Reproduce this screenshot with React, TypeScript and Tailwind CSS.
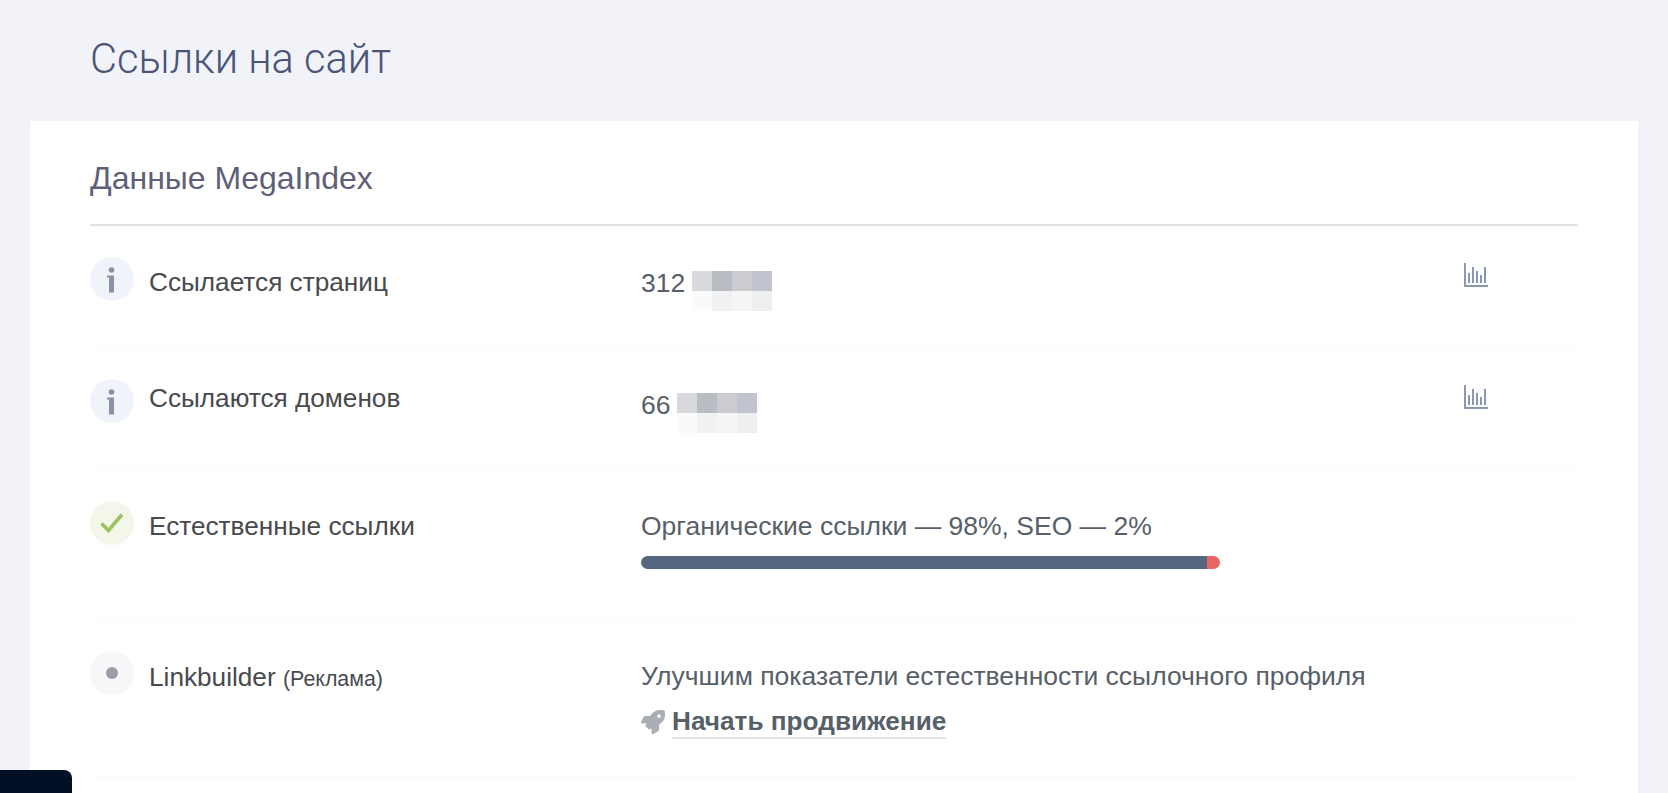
import { FaRocket } from "react-icons/fa";

function BlurredDelta() {
  const cells = [
    "bg-[#d8d9dc]",
    "bg-[#b9bdc3]",
    "bg-[#cbcbd0]",
    "bg-[#bfc4cf]",
    "bg-[#f9fafc]",
    "bg-[#f0f1f3]",
    "bg-[#f5f5f6]",
    "bg-[#eeeff1]",
  ];
  return (
    <div className="grid grid-cols-4 w-[80px] h-[40px] ml-[7px] mt-[10px]">
      {cells.map((c, i) => (
        <div key={i} className={`${c} h-[20px]`} />
      ))}
    </div>
  );
}

function ChartIcon() {
  return (
    <svg width="26" height="26" viewBox="0 0 26 26" className="text-[#8b98b5]" fill="currentColor">
      <rect x="1" y="1" width="2" height="24" />
      <rect x="1" y="23" width="24" height="2" />
      <rect x="5" y="11" width="2" height="10" />
      <rect x="9" y="5" width="2" height="16" />
      <rect x="13" y="9" width="2" height="12" />
      <rect x="17" y="13" width="2" height="8" />
      <rect x="21" y="5" width="2" height="16" />
    </svg>
  );
}

function InfoIcon() {
  return (
    <div className="w-[44px] h-[44px] rounded-full bg-[#eff3fa] shrink-0">
      <svg width="44" height="44" viewBox="0 0 44 44" fill="#8a91a6">
        <circle cx="21.5" cy="13" r="2.8" />
        <rect x="19" y="18.5" width="5" height="17" />
        <rect x="17" y="18.5" width="2" height="2" />
      </svg>
    </div>
  );
}

function CheckIcon() {
  return (
    <div className="w-[44px] h-[44px] rounded-full bg-[#f2f7e9] flex items-center justify-center shrink-0">
      <svg width="24" height="20" viewBox="0 0 24 20" fill="none">
        <path d="M1.5 10.5 L8.5 17.5 L22 1.5" stroke="#9cc264" strokeWidth="3.6" />
      </svg>
    </div>
  );
}

function DotIcon() {
  return (
    <div className="w-[44px] h-[44px] rounded-full bg-[#f7f7f9] flex items-center justify-center shrink-0">
      <div className="w-[12px] h-[12px] rounded-full bg-[#9c9da9]" />
    </div>
  );
}

function Row({ icon, label, rowClass, labelClass, valueClass, children, action }: any) {
  return (
    <div className={`flex border-b border-[#fafafb] ${rowClass}`}>
      <div className="w-[551px] flex gap-[15px] shrink-0">
        {icon}
        <div className={`text-[#484a4e] text-[26.2px] leading-[44px] ${labelClass}`}>{label}</div>
      </div>
      <div className={`flex-1 text-[#575f69] text-[26.5px] leading-[44px] ${valueClass}`}>{children}</div>
      {action && <div className="w-[115px] pt-[5px]">{action}</div>}
    </div>
  );
}

export default function App() {
  return (
    <div className="relative h-[793px] overflow-hidden bg-[#f1f3f8] font-['Liberation_Sans',sans-serif]">
      <h1 className="pl-[90px] pt-[34px] h-[121px] font-['Roboto',sans-serif] text-[41.6px] leading-[50px] text-[#4b5578] font-light">
        Ссылки на сайт
      </h1>
      <div className="mx-[30px] bg-white px-[60px] h-[672px]">
        <div className="h-[105px] pt-[36px] border-b-2 border-[#dfe1e4] text-[32px] leading-[42px] text-[#5f6078]">
          Данные MegaIndex
        </div>
        <Row
          icon={<InfoIcon />}
          label="Ссылается страниц"
          rowClass="h-[123px] pt-[31px]"
          labelClass="pt-[3px]"
          valueClass="pt-[4px]"
          action={<ChartIcon />}
        >
          <div className="flex">
            <span>312</span>
            <BlurredDelta />
          </div>
        </Row>
        <Row
          icon={<InfoIcon />}
          label="Ссылаются доменов"
          rowClass="h-[121px] pt-[30px]"
          labelClass="mt-[-3px]"
          valueClass="pt-[4px]"
          action={<ChartIcon />}
        >
          <div className="flex">
            <span>66</span>
            <BlurredDelta />
          </div>
        </Row>
        <Row
          icon={<CheckIcon />}
          label="Естественные ссылки"
          rowClass="h-[151px] pt-[31px]"
          labelClass="pt-[3px]"
          valueClass="pt-[3px]"
        >
          <div>Органические ссылки — 98%, SEO — 2%</div>
          <div className="flex w-[579px] h-[13px] mt-[8px] rounded-full overflow-hidden">
            <div className="flex-1 bg-[#54677f]" />
            <div className="w-[13px] bg-[#ec6565]" />
          </div>
        </Row>
        <Row
          icon={<DotIcon />}
          label={
            <>
              Linkbuilder <span className="text-[21.4px]">(Реклама)</span>
            </>
          }
          rowClass="h-[156px] pt-[30px]"
          labelClass="pt-[4px]"
          valueClass="pt-[3px]"
        >
          <div>Улучшим показатели естественности ссылочного профиля</div>
          <div className="flex items-center gap-[7px] mt-[7px]">
            <FaRocket className="text-[#a9aeb4] text-[24px]" />
            <a className="font-bold text-[26.2px] text-[#575f69] leading-[32px] border-b-2 border-[#dfe2e8]">Начать продвижение</a>
          </div>
        </Row>
      </div>
      <div className="absolute left-0 bottom-0 w-[72px] h-[23px] bg-[#021025] rounded-tr-[8px]" />
    </div>
  );
}
